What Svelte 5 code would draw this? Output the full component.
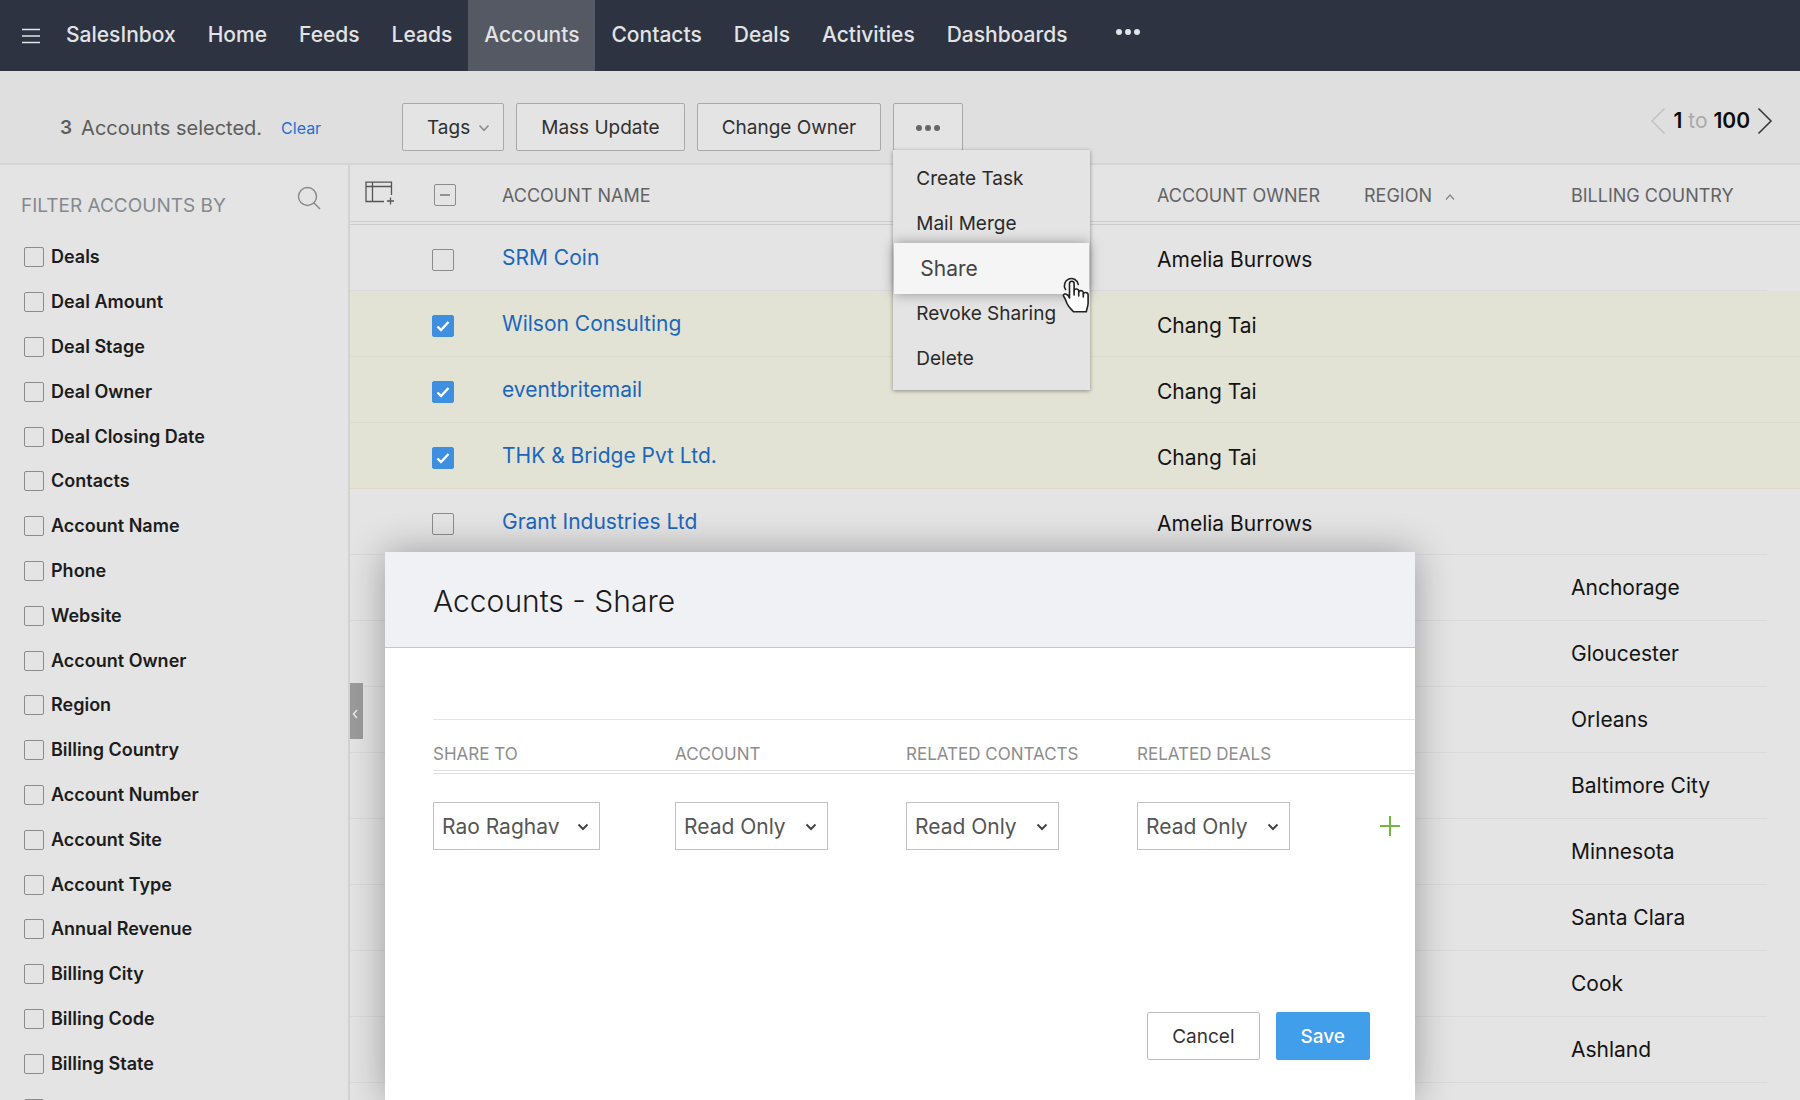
<script lang="ts">
  interface Account {
    name: string;
    owner: string;
    country: string;
    selected: boolean;
  }

  const navItems = [
    'SalesInbox',
    'Home',
    'Feeds',
    'Leads',
    'Accounts',
    'Contacts',
    'Deals',
    'Activities',
    'Dashboards'
  ];
  const activeNav = 'Accounts';

  const filters = [
    'Deals',
    'Deal Amount',
    'Deal Stage',
    'Deal Owner',
    'Deal Closing Date',
    'Contacts',
    'Account Name',
    'Phone',
    'Website',
    'Account Owner',
    'Region',
    'Billing Country',
    'Account Number',
    'Account Site',
    'Account Type',
    'Annual Revenue',
    'Billing City',
    'Billing Code',
    'Billing State',
    ''
  ];

  const menuItems = ['Create Task', 'Mail Merge', 'Share', 'Revoke Sharing', 'Delete'];
  const activeMenuItem = 'Share';

  const blankRow = (country: string): Account => ({ name: '', owner: '', country, selected: false });

  let accounts: Account[] = [
    { name: 'SRM Coin', owner: 'Amelia Burrows', country: '', selected: false },
    { name: 'Wilson Consulting', owner: 'Chang Tai', country: '', selected: true },
    { name: 'eventbritemail', owner: 'Chang Tai', country: '', selected: true },
    { name: 'THK & Bridge Pvt Ltd.', owner: 'Chang Tai', country: '', selected: true },
    { name: 'Grant Industries Ltd', owner: 'Amelia Burrows', country: '', selected: false },
    blankRow('Anchorage'),
    blankRow('Gloucester'),
    blankRow('Orleans'),
    blankRow('Baltimore City'),
    blankRow('Minnesota'),
    blankRow('Santa Clara'),
    blankRow('Cook'),
    blankRow('Ashland'),
    blankRow('')
  ];

  const shareFields = [
    { id: 'share-to', label: 'SHARE TO', options: ['Rao Raghav'] },
    { id: 'share-account', label: 'ACCOUNT', options: ['Read Only', 'Read/Write'] },
    { id: 'share-contacts', label: 'RELATED CONTACTS', options: ['Read Only', 'Read/Write'] },
    { id: 'share-deals', label: 'RELATED DEALS', options: ['Read Only', 'Read/Write'] }
  ];

  const clearSelection = () => {
    accounts = accounts.map((account) => ({ ...account, selected: false }));
  };

  $: selectedCount = accounts.filter((account) => account.selected).length;
</script>

<div class="app">
  <nav class="topbar" aria-label="Modules">
    <button class="burger" type="button" aria-label="Open menu">
      <svg width="18" height="16" viewBox="0 0 18 16" fill="none" stroke="currentColor" stroke-width="1.5">
        <path d="M0 1.5h18M0 8h18M0 14.5h18" />
      </svg>
    </button>
    {#each navItems as item}
      <a class="nav-link" class:active={item === activeNav} href="#{item.toLowerCase()}">{item}</a>
    {/each}
    <button class="more" type="button" aria-label="More modules">
      <svg width="24" height="8" viewBox="0 0 24 8" fill="currentColor">
        <circle cx="3" cy="4" r="3" /><circle cx="12" cy="4" r="3" /><circle cx="21" cy="4" r="3" />
      </svg>
    </button>
  </nav>

  <header class="toolbar">
    <p class="summary">
      <strong>{selectedCount}</strong>
      <span>Accounts selected.</span>
      <button class="clear" type="button" on:click={clearSelection}>Clear</button>
    </p>
    <div class="actions">
      <button class="btn tags" type="button">
        Tags
        <svg width="12" height="8" viewBox="0 0 12 8" fill="none" stroke="#8c8c8c" stroke-width="1.6">
          <path d="M1.5 1.5 6 6.3l4.5-4.8" />
        </svg>
      </button>
      <button class="btn" type="button">Mass Update</button>
      <button class="btn" type="button">Change Owner</button>
      <div class="menu-anchor">
        <button class="btn dots" type="button" aria-label="More actions" aria-expanded="true">
          <svg width="24" height="8" viewBox="0 0 24 8" fill="currentColor">
            <circle cx="3" cy="4" r="3" /><circle cx="12" cy="4" r="3" /><circle cx="21" cy="4" r="3" />
          </svg>
        </button>
        <div class="menu">
          {#each menuItems as item}
            <button class="menu-item" class:active={item === activeMenuItem} type="button">{item}</button>
          {/each}
          <svg class="pointer" width="28" height="38" viewBox="0 0 28 38" fill="none" stroke="#222" stroke-width="1.6" stroke-linecap="round" stroke-linejoin="round">
            <path d="M3.6 13.5A7 7 0 1 1 16.300 8.5" />
            <path
              fill="#fff"
              d="M7.5 22V7.5a2.300 2.300 0 0 1 4.600 0V15c0-2.600 4.300-2.600 4.600 0v1.500c.2-2.600 4.300-2.400 4.600 0V18c.4-2.200 4.600-2 4.800.6v8.900c-.3 3.500-1.400 5.300-1.800 8.300H11.500C9 33 6.500 31 5 27.500 4 24 2.500 21.500 1.300 19.500c1-3 5-1.200 6.200 2.500z"
            />
            <path d="M12.100 15v4M16.700 16.500V20M21.300 18v3" />
          </svg>
        </div>
      </div>
    </div>
    <div class="pager">
      <button type="button" aria-label="Previous page">
        <svg width="16" height="28" viewBox="0 0 16 28" fill="none" stroke="#c4c4c4" stroke-width="1.6">
          <path d="M14.500 1.500 2 14l12.500 12.500" />
        </svg>
      </button>
      <span><b>1</b> to <b>100</b></span>
      <button type="button" aria-label="Next page">
        <svg width="16" height="28" viewBox="0 0 16 28" fill="none" stroke="#3a3a3a" stroke-width="1.6">
          <path d="M1.500 1.500 14 14 1.500 26.500" />
        </svg>
      </button>
    </div>
  </header>

  <div class="content">
    <aside class="sidebar">
      <div class="sidebar-head">
        <h2>FILTER ACCOUNTS BY</h2>
        <button type="button" aria-label="Search filters">
          <svg width="24" height="24" viewBox="0 0 24 24" fill="none" stroke="#888" stroke-width="1.4">
            <circle cx="10.5" cy="10.5" r="9" /><path d="m17 17 6 6" />
          </svg>
        </button>
      </div>
      <ul>
        {#each filters as filter}
          <li>
            <label><input type="checkbox" aria-label={filter || 'Other'} />{filter}</label>
          </li>
        {/each}
      </ul>
    </aside>

    <main class="list">
      <button class="collapse" type="button" aria-label="Collapse filters">
        <svg width="6" height="10" viewBox="0 0 6 10" fill="none" stroke="#eee" stroke-width="1.4">
          <path d="M5 1 1.500 5 5 9" />
        </svg>
      </button>
      <table>
        <colgroup>
          <col class="col-tools" />
          <col class="col-check" />
          <col />
          <col class="col-data" />
          <col class="col-data" />
          <col class="col-country" />
          <col class="col-end" />
        </colgroup>
        <thead>
          <tr>
            <th class="tools">
              <svg width="29" height="24" viewBox="0 0 29 24" fill="none" stroke="#555" stroke-width="1.3">
                <path d="M19 20.500H1V1.200h25.500V14M1 5.500h25.500M7.500 1.200v19.300M25.500 16.500v7M22 20h7" />
              </svg>
            </th>
            <th class="check">
              <input type="checkbox" class="partial" aria-label="Select all accounts" />
            </th>
            <th>ACCOUNT NAME</th>
            <th>ACCOUNT OWNER</th>
            <th>
              REGION
              <svg class="sort" width="10" height="6" viewBox="0 0 10 6" fill="none" stroke="#888" stroke-width="1.3">
                <path d="M1 5.500 5 1 9 5.500" />
              </svg>
            </th>
            <th>BILLING COUNTRY</th>
            <th></th>
          </tr>
        </thead>
        <tbody>
          {#each accounts as account}
            <tr class:selected={account.selected}>
              <td></td>
              <td class="low">
                {#if account.name}
                  <input type="checkbox" aria-label="Select {account.name}" bind:checked={account.selected} />
                {/if}
              </td>
              <td>
                {#if account.name}
                  <a href="#account">{account.name}</a>
                {/if}
              </td>
              <td class="low">{account.owner}</td>
              <td></td>
              <td>{account.country}</td>
              <td class="end"></td>
            </tr>
          {/each}
        </tbody>
      </table>
    </main>
  </div>

  <div class="modal" role="dialog" aria-labelledby="share-title">
    <h1 id="share-title">Accounts - Share</h1>
    <form on:submit|preventDefault>
      <div class="share-grid share-labels">
        {#each shareFields as field}
          <label for={field.id}>{field.label}</label>
        {/each}
      </div>
      <div class="share-grid share-values">
        {#each shareFields as field}
          <div class="select">
            <select id={field.id}>
              {#each field.options as option}
                <option>{option}</option>
              {/each}
            </select>
            <svg width="12" height="8" viewBox="0 0 12 8" fill="none" stroke="#444" stroke-width="2">
              <path d="M1.500 1.500 6 6l4.500-4.500" />
            </svg>
          </div>
        {/each}
        <button class="add" type="button" aria-label="Add share rule">
          <svg width="20" height="20" viewBox="0 0 20 20" stroke="#72b840" stroke-width="2">
            <path d="M10 0v20M0 10h20" />
          </svg>
        </button>
      </div>
      <div class="buttons">
        <button class="cancel" type="button">Cancel</button>
        <button class="save" type="submit">Save</button>
      </div>
    </form>
  </div>
</div>

<style>
  :global(body) {
    overflow: hidden;
  }

  .app {
    position: relative;
    display: flex;
    flex-direction: column;
    height: 100vh;
    overflow: hidden;
    background: #e4e4e4;
    color: #1c1c1c;
    font-family: Inter, 'Liberation Sans', sans-serif;
    font-size: 21px;
    line-height: 24px;
  }

  button {
    padding: 0;
    border: none;
    background: none;
    color: inherit;
    font: inherit;
    cursor: pointer;
  }

  svg {
    display: block;
  }

  a {
    text-decoration: none;
  }

  .topbar {
    display: flex;
    flex: none;
    height: 71px;
    background: #2e3342;
    color: #e2e3e5;
  }

  .burger {
    padding: 0 10px 0 22px;
  }

  .nav-link {
    display: flex;
    align-items: center;
    padding: 0 16px 2px;
    color: inherit;
    font-weight: 500;
  }

  .nav-link.active {
    background: #555963;
  }

  .more {
    padding: 0 32px 8px;
  }

  .toolbar {
    position: relative;
    z-index: 1;
    display: flex;
    flex: none;
    align-items: flex-start;
    height: 92px;
    border-bottom: 2px solid #d5d5d5;
    background: #dfdfdf;
  }

  .summary {
    display: flex;
    flex: none;
    gap: 9px;
    box-sizing: border-box;
    width: 402px;
    margin: 0;
    padding: 45px 0 0 60px;
    color: #5c5c5c;
    font-size: 20px;
  }

  .summary strong {
    font-size: 19px;
    font-weight: 600;
  }

  .clear {
    margin-left: 10px;
    color: #1f6fcf;
    font-size: 16px;
  }

  .actions {
    display: flex;
    gap: 12px;
    padding-top: 32px;
  }

  .btn {
    display: flex;
    align-items: center;
    gap: 8px;
    box-sizing: border-box;
    height: 48px;
    padding: 2px 24px 0;
    border: 1px solid #a9a9a9;
    border-radius: 2px;
    background: #e4e4e4;
    color: #303030;
    font-size: 19px;
    white-space: nowrap;
  }

  .btn.tags {
    padding-right: 13px;
  }

  .btn.dots {
    padding: 2px 22px 0;
    color: #666;
  }

  .menu-anchor {
    position: relative;
  }

  .menu {
    position: absolute;
    top: 47px;
    left: 0;
    box-sizing: border-box;
    width: 197px;
    padding: 6px 1px 9px;
    background: #e4e4e4;
    box-shadow: 0 1px 4px rgba(0, 0, 0, 0.4);
  }

  .menu-item {
    display: block;
    width: 100%;
    height: 45px;
    padding-left: 22px;
    color: #2a2a2a;
    font-size: 19px;
    text-align: left;
    white-space: nowrap;
  }

  .menu-item.active {
    position: relative;
    height: 51px;
    margin: -3px 0;
    padding-left: 26px;
    background: #f5f5f5;
    box-shadow: 0 0 12px rgba(0, 0, 0, 0.35);
    color: #444;
    font-size: 21px;
  }

  .pointer {
    position: absolute;
    top: 126px;
    right: 0;
  }

  .pager {
    display: flex;
    align-items: center;
    gap: 7px;
    margin-left: auto;
    padding: 36px 27px 0 0;
    color: #aaa;
  }

  .pager b {
    color: #0c0c0c;
    font-weight: 600;
  }

  .content {
    display: flex;
    flex: 1;
    min-height: 0;
  }

  .sidebar {
    flex: none;
    box-sizing: border-box;
    width: 350px;
    border-right: 2px solid #d3d3d3;
  }

  .sidebar-head {
    display: flex;
    align-items: flex-start;
    justify-content: space-between;
    box-sizing: border-box;
    height: 70px;
    padding: 21px 27px 0 21px;
  }

  h2 {
    margin: 8px 0 0;
    color: #85898e;
    font-size: 19px;
    font-weight: 400;
  }

  ul {
    display: grid;
    grid-auto-rows: 1fr;
    height: 896px;
    margin: 0;
    padding: 0 0 0 24px;
    list-style: none;
  }

  li {
    display: flex;
    align-items: center;
  }

  label {
    display: flex;
    align-items: center;
    gap: 7px;
    color: #1c1c1c;
    font-size: 18px;
    font-weight: 600;
  }

  input[type='checkbox'] {
    display: block;
    flex: none;
    box-sizing: border-box;
    width: 22px;
    height: 22px;
    margin: 0;
    appearance: none;
    border: 1px solid #8c8c8c;
    border-radius: 2px;
    background: center / 16px no-repeat;
  }

  li input[type='checkbox'] {
    width: 20px;
    height: 20px;
  }

  input[type='checkbox']:checked {
    border-color: #3f8fe0;
    background-color: #3f8fe0;
    background-image: url("data:image/svg+xml,%3Csvg xmlns='http://www.w3.org/2000/svg' viewBox='0 0 16 16' fill='none' stroke='white' stroke-width='2.4'%3E%3Cpath d='M2.500 8.500 6 12l7.500-8'/%3E%3C/svg%3E");
  }

  input.partial {
    background-image: url("data:image/svg+xml,%3Csvg xmlns='http://www.w3.org/2000/svg' viewBox='0 0 16 16' stroke='%23777' stroke-width='1.4'%3E%3Cpath d='M3 8h10'/%3E%3C/svg%3E");
  }

  .list {
    position: relative;
    flex: 1;
    min-width: 0;
  }

  .collapse {
    position: absolute;
    top: 518px;
    left: 0;
    display: grid;
    place-items: center;
    width: 13px;
    height: 56px;
    padding: 6px 3px 0 0;
    background: #9b9b9b;
  }

  table {
    width: 100%;
    table-layout: fixed;
    border-collapse: separate;
    border-spacing: 0;
  }

  .col-tools {
    width: 82px;
  }

  .col-check {
    width: 70px;
  }

  .col-data {
    width: 207px;
  }

  .col-country {
    width: 196px;
  }

  .col-end {
    width: 33px;
  }

  th {
    box-sizing: border-box;
    height: 60px;
    padding: 6px 0 0;
    border-bottom: 4px double #cdcdcd;
    color: #636363;
    font-size: 18px;
    font-weight: 400;
    text-align: left;
    white-space: nowrap;
  }

  th.tools {
    padding: 0 0 0 15px;
  }

  th.check {
    padding: 4px 0 0 2px;
  }

  .sort {
    display: inline-block;
    margin: 0 0 2px 8px;
  }

  td {
    box-sizing: border-box;
    height: 66px;
    padding: 0;
    border-bottom: 1px solid #dadada;
    color: #141414;
    white-space: nowrap;
  }

  td.low {
    padding-top: 4px;
  }

  td.end {
    border-bottom-color: transparent;
  }

  td a {
    color: #1a66bd;
  }

  tr.selected td {
    border-bottom-color: #dfd9c8;
    background: #e3e3d5;
  }

  .modal {
    position: absolute;
    z-index: 2;
    top: 552px;
    right: 385px;
    bottom: 0;
    left: 385px;
    background: #fff;
    box-shadow: 0 0 36px rgba(0, 0, 0, 0.32);
  }

  h1 {
    margin: 0;
    padding: 33px 48px 29px;
    border-bottom: 1px solid #c6c6c8;
    background: #f0f1f4;
    color: #1a1a1a;
    font-size: 30px;
    font-weight: 300;
    line-height: 33px;
  }

  form {
    padding: 71px 0 0 48px;
  }

  .share-grid {
    display: grid;
    grid-template-columns: 242px 231px 231px 231px 1fr;
  }

  .share-labels {
    padding: 22px 0 4px;
    border-top: 1px solid #e4e4e4;
    border-bottom: 4px double #dedede;
  }

  .share-labels label {
    color: #8d8d8d;
    font-size: 17px;
    font-weight: 400;
  }

  .share-values {
    align-items: center;
    padding-top: 28px;
  }

  .select {
    position: relative;
    width: 153px;
  }

  .select:first-child {
    width: 167px;
  }

  .select svg {
    position: absolute;
    top: 21px;
    right: 11px;
    pointer-events: none;
  }

  select {
    width: 100%;
    height: 48px;
    padding: 2px 8px 0;
    appearance: none;
    border: 1px solid #c2c2c2;
    border-radius: 0;
    background: #fff;
    color: #555;
    font: inherit;
  }

  .add {
    justify-self: start;
    margin-left: 12px;
  }

  .buttons {
    display: flex;
    justify-content: flex-end;
    gap: 16px;
    padding: 162px 45px 0 0;
  }

  .buttons button {
    height: 48px;
    padding: 2px 24px 0;
    border-radius: 2px;
    font-size: 19px;
  }

  .cancel {
    border: 1px solid #bdbdbd;
    color: #333;
  }

  .buttons .save {
    padding: 2px 25px 0;
    background: #419eea;
    color: #fff;
    font-weight: 500;
  }
</style>
